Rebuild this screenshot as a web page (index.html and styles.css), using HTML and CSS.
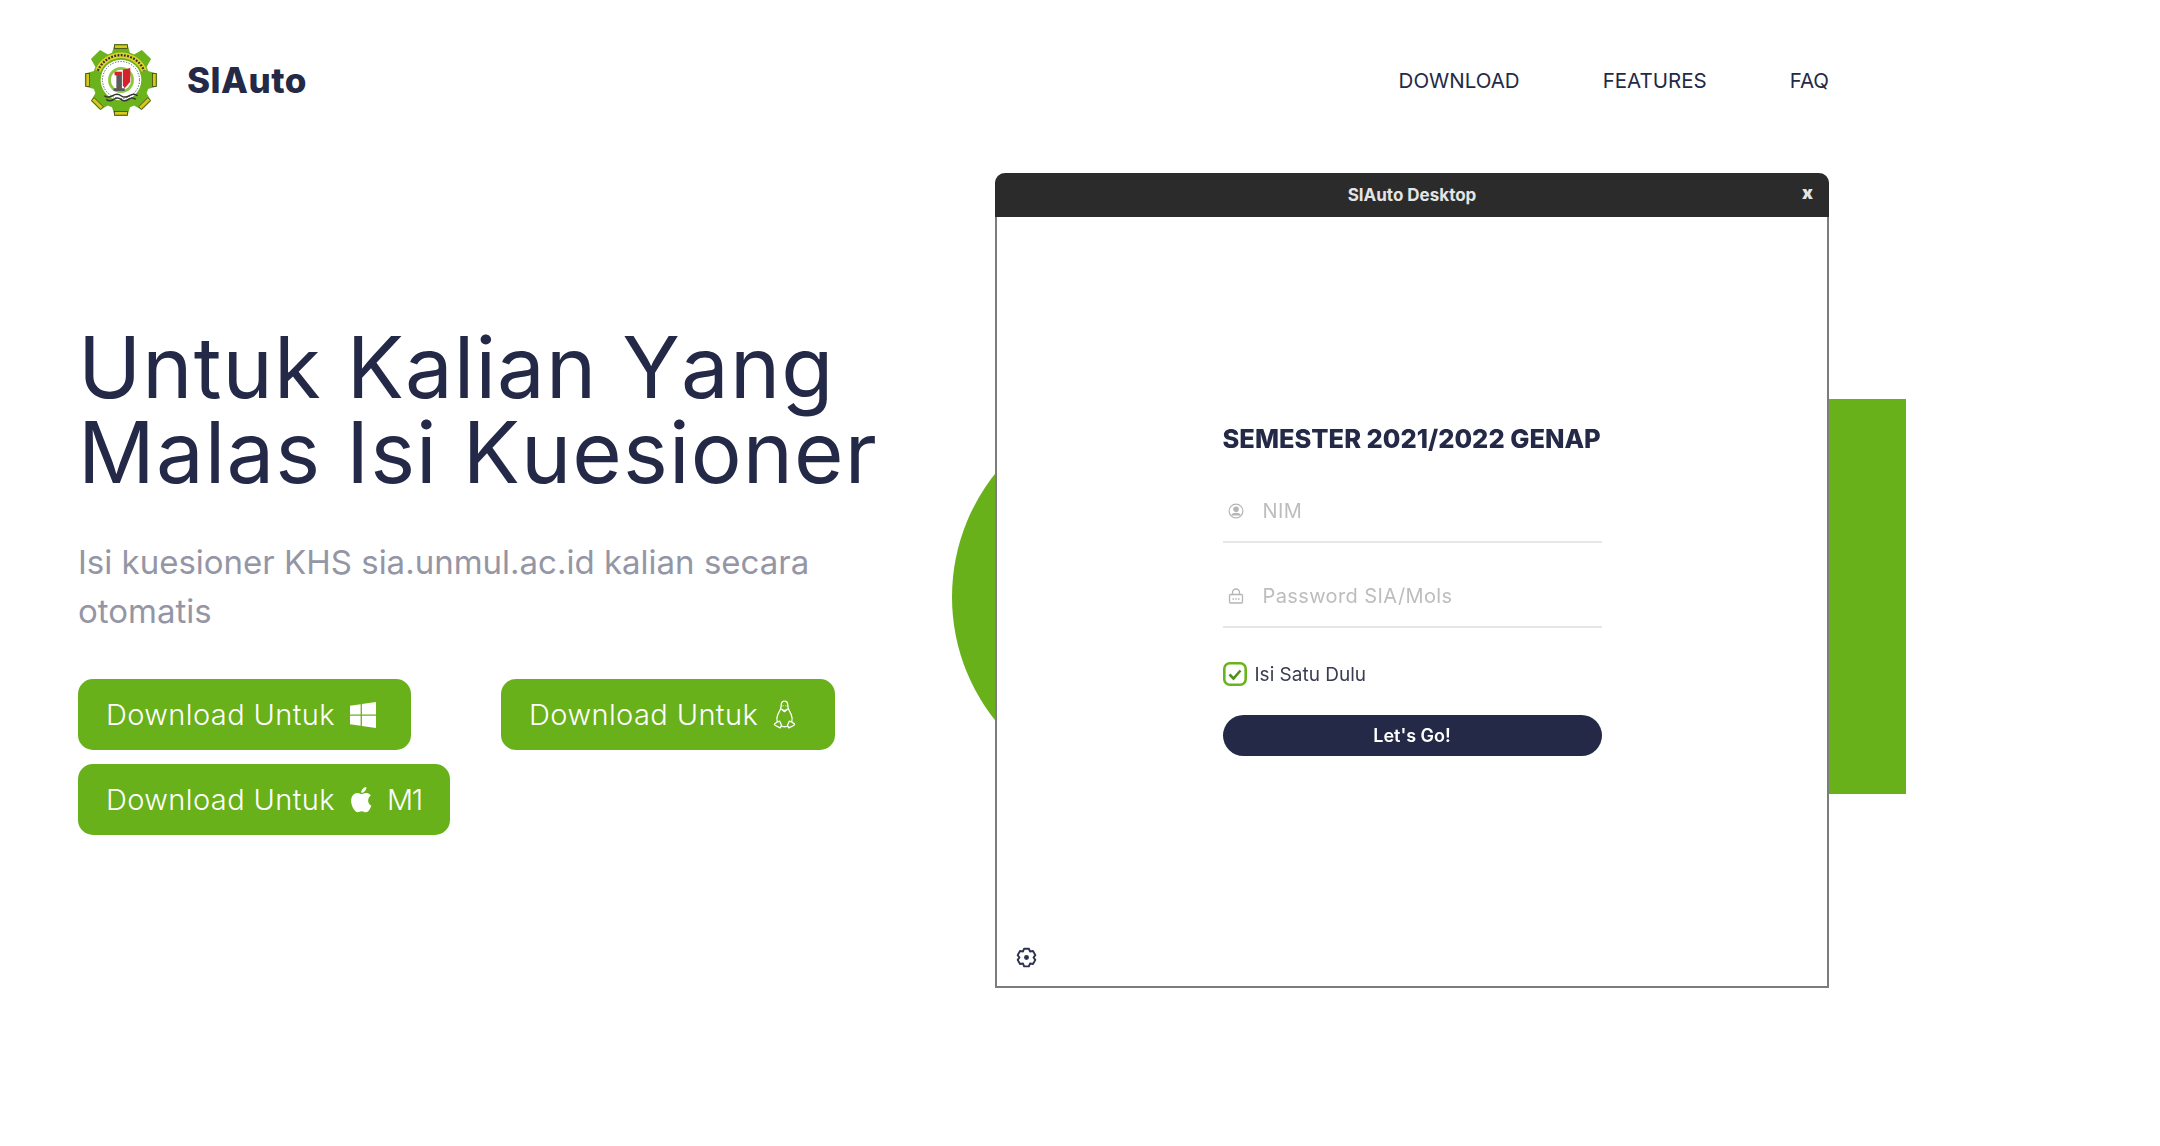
FILE: index.html
```html
<!DOCTYPE html>
<html lang="en">

<head>
    <title>SIAuto</title>
    <meta charset="UTF-8">
    <link rel="stylesheet" href="styles.css">
</head>

<body>
    <nav class="navbar">
        <a class="brand">
            <svg class="brand-logo" viewBox="0 0 80 80">
                <g fill="#6ab31c">
                    <path d="M30 12 33 1h14l3 11z"/>
                    <path d="M30 12 33 1h14l3 11z" transform="rotate(45 40 40)"/>
                    <path d="M30 12 33 1h14l3 11z" transform="rotate(90 40 40)"/>
                    <path d="M30 12 33 1h14l3 11z" transform="rotate(135 40 40)"/>
                    <path d="M30 12 33 1h14l3 11z" transform="rotate(180 40 40)"/>
                    <path d="M30 12 33 1h14l3 11z" transform="rotate(225 40 40)"/>
                    <path d="M30 12 33 1h14l3 11z" transform="rotate(270 40 40)"/>
                    <path d="M30 12 33 1h14l3 11z" transform="rotate(315 40 40)"/>
                    <circle cx="40" cy="40" r="31"/>
                </g>
                <g fill="#d8c81e" stroke="#3c3c1a" stroke-width=".8">
                    <rect x="33" y="2" width="14" height="4"/>
                    <rect x="33" y="74" width="14" height="4"/>
                    <rect x="2" y="33" width="4" height="14"/>
                    <rect x="74" y="33" width="4" height="14"/>
                    <rect x="33" y="2" width="14" height="4" transform="rotate(135 40 40)"/>
                    <rect x="33" y="2" width="14" height="4" transform="rotate(225 40 40)"/>
                </g>
                <path d="M15 30a27 27 0 0 1 50 0" fill="none" stroke="#e2d22a" stroke-width="6"/>
                <path d="M15 30a27 27 0 0 1 50 0" fill="none" stroke="#333" stroke-width="2.500" stroke-dasharray="2 1.500"/>
                <circle cx="40" cy="40" r="22" fill="#fff"/>
                <circle cx="40" cy="40" r="20" fill="none" stroke="#555" stroke-width="1" stroke-dasharray="1.500 1.500"/>
                <circle cx="40" cy="40" r="14" fill="#8cc63f"/>
                <circle cx="40" cy="40" r="11" fill="#fff"/>
                <path d="M42 29l8-2v15l-6 7-2-3z" fill="#d4232b"/>
                <path d="M35 33h6v16h3v3H32v-3h3z" fill="#5a5a5a"/>
                <path d="M33 31h8v4h-8z" fill="#d4232b"/>
                <path d="M22 57q4 3 9 0t9 0 9 0 9 0M24 61q4 3 8 0t8 0 8 0 8 0" fill="none" stroke="#333" stroke-width="1.600"/>
            </svg>
            <span>SIAuto</span>
        </a>
        <div class="nav-links">
            <a>DOWNLOAD</a>
            <a>FEATURES</a>
            <a>FAQ</a>
        </div>
    </nav>

    <section class="hero">
        <div class="hero-text">
            <h1>Untuk Kalian Yang<br>Malas Isi Kuesioner</h1>
            <p>Isi kuesioner KHS sia.unmul.ac.id kalian secara otomatis</p>
            <div class="downloads">
                <a class="btn">Download Untuk
                    <svg class="btn-icon icon-win" viewBox="0 0 24 24" fill="#fff"><path d="M0 3.400 9.800 2v9.500H0zM11 1.900 24 0v11.500H11zM0 12.600h9.800V22L0 20.600zM11 12.600h13V24l-13-1.900z"/></svg>
                </a>
                <a class="btn">Download Untuk
                    <svg class="btn-icon icon-tux" viewBox="0 0 24 30" fill="none" stroke="#fff" stroke-width="1.400" stroke-linejoin="round"><path d="M12 1C9.500 1 8.500 3 8.500 6c0 3-1.500 5-3.500 9-1 2.500-1.500 5-.5 8"/><path d="M12 1c2.500 0 3.500 2 3.500 5 0 3 1.500 5 3.500 9 1 2.500 1.500 5 .5 8"/><path d="M9 9.500c1.500 1.500 4.500 1.500 6 0l-3 2.500z"/><path d="M8 27c2.500 1 5.500 1 8 0"/><path d="M4 23l-2.500 2 1 1.500L7.500 29 9 26.500 7 22zM20 23l2.500 2-1 1.500-5 2.500-1.500-2.500 2-4.500z"/><path d="M10.500 5.500v1M13.500 5.500v1"/></svg>
                </a>
                <a class="btn">Download Untuk
                    <svg class="btn-icon icon-apple" viewBox="4 2.400 16 20" fill="#fff"><path d="M17.500 12.700c0-2.400 2-3.600 2.100-3.700-1.100-1.700-2.900-1.900-3.500-1.900-1.500-.2-2.900.9-3.700.9-.8 0-2-.9-3.200-.9-1.700 0-3.200 1-4 2.500-1.700 3-.4 7.400 1.200 9.800.8 1.200 1.800 2.500 3 2.500 1.200-.1 1.700-.8 3.100-.8 1.500 0 1.900.8 3.200.8 1.300 0 2.200-1.200 3-2.400.9-1.400 1.300-2.700 1.300-2.800-.1 0-2.500-1-2.500-4zM15.100 5.500c.7-.8 1.100-2 1-3.100-1 0-2.200.7-2.900 1.500-.6.700-1.200 1.900-1 3 1.100.1 2.200-.6 2.900-1.400z"/></svg>
                    <span class="chip">M1</span>
                </a>
            </div>
        </div>

        <div class="app-wrap">
            <div class="deco-circle"></div>
            <div class="deco-block"></div>
            <div class="app-window">
                <div class="titlebar">
                    <span>SIAuto Desktop</span>
                    <b>x</b>
                </div>
                <div class="app-body">
                    <form class="login">
                        <h2>SEMESTER 2021/2022 GENAP</h2>
                        <div class="field">
                            <svg viewBox="0 0 16 16" fill="none" stroke="#b5b5b5" stroke-width="1.200"><circle cx="8" cy="8" r="6.900"/><circle cx="8" cy="6.300" r="2.200" fill="#b5b5b5"/><path d="M3.500 12.500c1.500-2.800 7.500-2.800 9 0" fill="#b5b5b5"/></svg>
                            <span>NIM</span>
                        </div>
                        <div class="field">
                            <svg viewBox="0 0 16 16" fill="none" stroke="#b5b5b5" stroke-width="1.300"><rect x="1.500" y="6.500" width="13" height="8.500" rx="1"/><path d="M4.500 6.500V4.500a3.500 3.500 0 0 1 7 0v2"/><path d="M4.500 11h1.500M7.300 11h1.500M10 11h1.500"/></svg>
                            <span>Password SIA/Mols</span>
                        </div>
                        <label class="check">
                            <svg viewBox="0 0 24 24" fill="none" stroke="#6ab31c" stroke-width="2.600"><rect x="1.300" y="1.300" width="21.400" height="21.400" rx="5.500"/><path d="M6.500 12.500l4 4 7-8" stroke="#4f8f16"/></svg>
                            Isi Satu Dulu
                        </label>
                        <a class="go">Let's Go!</a>
                    </form>
                    <svg class="settings" viewBox="0 0 24 24" fill="none" stroke="#2d3250" stroke-width="2.200" stroke-linejoin="round"><path d="M9.300 1.900h5.400L16 5.100l3.400-.5 2.700 4.700L20 12l2.100 2.700-2.700 4.700-3.400-.5-1.300 3.200H9.300L8 18.900l-3.400.5-2.700-4.700L4 12 1.900 9.300l2.700-4.700 3.400.5z"/><circle cx="12" cy="12" r="2.800" fill="#2d3250" stroke="none"/></svg>
                </div>
            </div>
        </div>
    </section>
</body>

</html>
```

FILE: styles.css
```css
* {
    box-sizing: border-box;
    margin: 0;
}

html, body {
    height: 100%;
}

body {
    font-family: "Inter", "Liberation Sans", sans-serif;
    color: #232946;
    background: #fff;
    overflow: hidden;
}

.navbar {
    display: flex;
    justify-content: space-between;
    align-items: center;
    height: 80px;
    margin: 40px 331px 0 84px;
}

.brand {
    display: flex;
    align-items: center;
    gap: 29px;
    font-size: 35px;
    font-weight: 800;
    letter-spacing: .5px;
}

.brand-logo {
    width: 74px;
    height: 74px;
}

.nav-links {
    display: flex;
    gap: 83px;
    font-size: 20.500px;
}

.hero {
    display: flex;
    justify-content: space-between;
    margin: 53px 331px 0 78px;
}

.hero-text {
    width: 780px;
    padding-top: 152px;
}

h1 {
    font-size: 85px;
    font-weight: 400;
    line-height: 85px;
    letter-spacing: 1.100px;
    font-kerning: none;
    white-space: nowrap;
}

.hero-text p {
    margin-top: 43px;
    font-size: 33px;
    line-height: 49px;
    color: #9496a6;
}

.downloads {
    display: flex;
    flex-wrap: wrap;
    gap: 14px 90px;
    margin-top: 43px;
}

.btn {
    display: flex;
    align-items: center;
    gap: 15px;
    height: 71px;
    padding: 0 28px;
    border-radius: 15px;
    background: #68b11a;
    color: #fff;
    font-size: 29px;
    font-weight: 300;
    letter-spacing: .4px;
}

.btn-icon {
    height: 26px;
}

.icon-win {
    width: 26px;
    margin-right: 7px;
}

.icon-tux {
    width: 23px;
    height: 31px;
    margin-right: 11px;
}

.icon-apple {
    width: 22px;
}

.chip {
    letter-spacing: -1.500px;
}

.app-wrap {
    position: relative;
    width: 834px;
    height: 815px;
}

.deco-circle {
    position: absolute;
    left: -43px;
    top: 226px;
    width: 396px;
    height: 396px;
    border-radius: 50%;
    background: #68b11a;
}

.deco-block {
    position: absolute;
    right: -77px;
    top: 226px;
    width: 200px;
    height: 395px;
    background: #68b11a;
}

.app-window {
    position: relative;
    display: flex;
    flex-direction: column;
    height: 100%;
    border: 2px solid #7c7c7c;
    border-top: 0;
    border-radius: 10px 10px 0 0;
    background: #fff;
    filter: blur(.4px);
}

.titlebar {
    display: flex;
    justify-content: center;
    align-items: center;
    position: relative;
    height: 44px;
    margin: 0 -2px;
    border-radius: 10px 10px 0 0;
    background: #2b2b2b;
    color: #e4e4e4;
    font-size: 17px;
    font-weight: 700;
}

.titlebar b {
    position: absolute;
    right: 16px;
    top: 9px;
    font-size: 18px;
}

.app-body {
    position: relative;
    flex: 1;
    display: flex;
    justify-content: center;
    padding-top: 202px;
}

.login {
    width: 379px;
}

h2 {
    font-size: 25.500px;
    font-weight: 800;
    line-height: 40px;
    white-space: nowrap;
}

.field {
    display: flex;
    align-items: center;
    gap: 19px;
    height: 62px;
    margin-top: 22px;
    padding: 0 0 0 5px;
    border-bottom: 2px solid #e6e6e6;
    font-size: 20px;
    letter-spacing: .4px;
    color: #bdbdbd;
}

.field + .field {
    margin-top: 23px;
}

.field svg {
    width: 16px;
    height: 16px;
}

.check {
    display: flex;
    align-items: center;
    gap: 8px;
    margin-top: 34px;
    font-size: 19px;
    color: #3a3d52;
}

.check svg {
    width: 24px;
    height: 24px;
}

.go {
    display: block;
    margin-top: 29px;
    height: 41px;
    border-radius: 21px;
    background: #232946;
    color: #fff;
    font-size: 18px;
    font-weight: 600;
    line-height: 41px;
    text-align: center;
}

.settings {
    position: absolute;
    left: 19px;
    bottom: 18px;
    width: 21px;
    height: 21px;
}
```
